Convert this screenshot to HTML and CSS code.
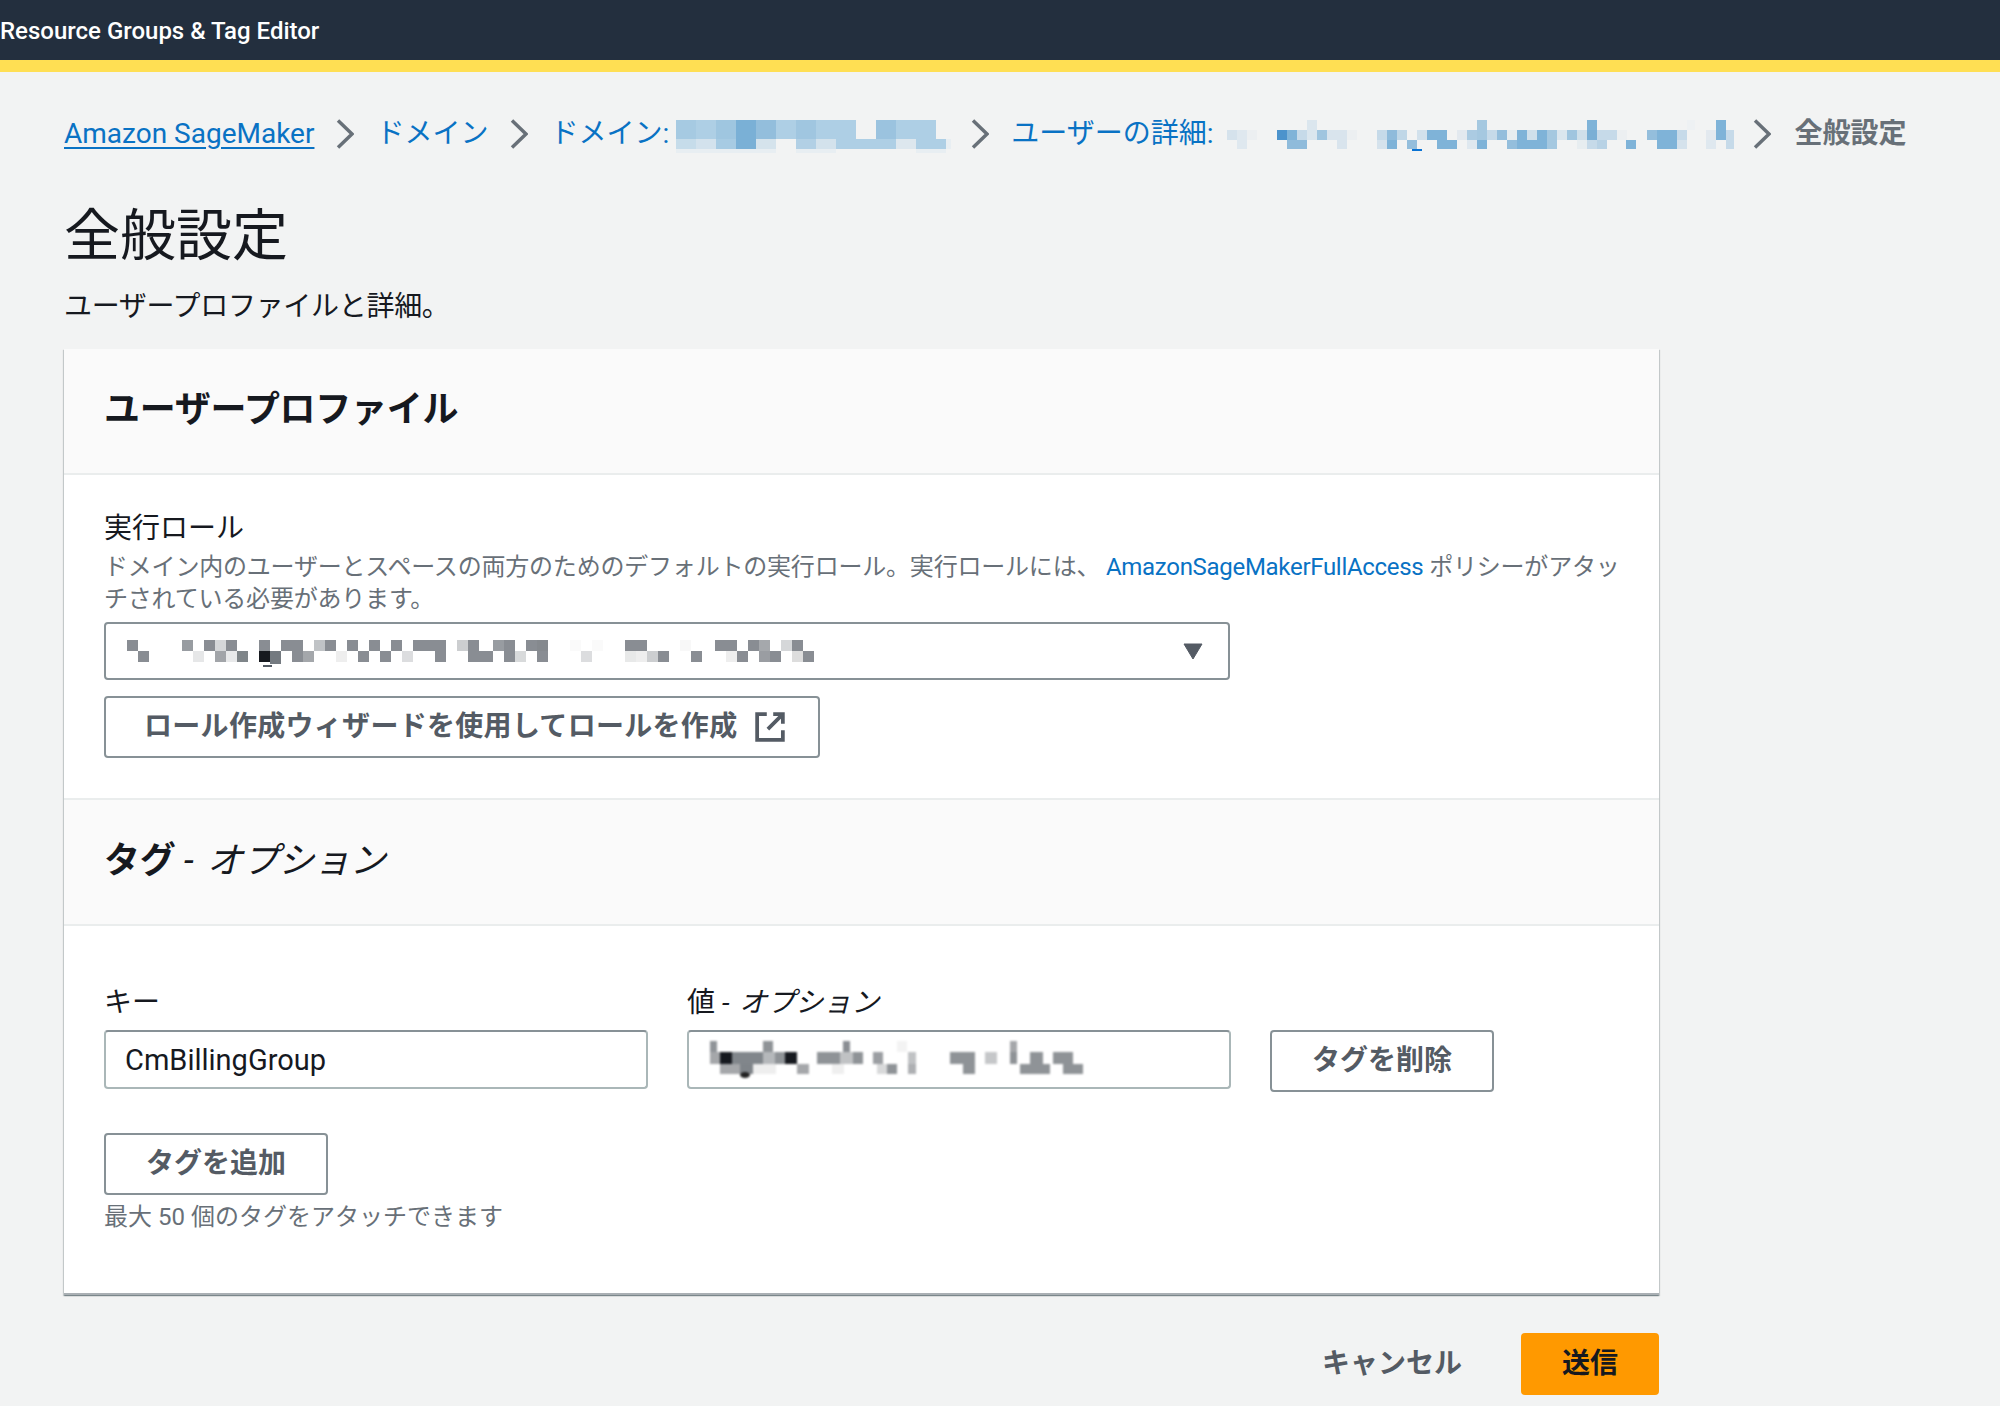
FILE: index.html
```html
<!DOCTYPE html>
<html lang="ja">
<head>
    <meta charset="UTF-8">
    <title>全般設定</title>
    <link rel="stylesheet" href="styles.css">
</head>
<body>
    <div class="topbar">Resource Groups &amp; Tag Editor</div>

    <main class="page">
        <nav class="crumbs">
            <a class="crumb-first" href="#">Amazon SageMaker</a>
            <svg class="chevron" viewBox="0 0 18 30"><path d="M2 1.5 16 15 2 28.5"/></svg>
            <a href="#">ドメイン</a>
            <svg class="chevron" viewBox="0 0 18 30"><path d="M2 1.5 16 15 2 28.5"/></svg>
            <span class="crumb-group">
                <a href="#">ドメイン:</a>
                <svg class="mosaic" width="273" height="29">
                    <rect x="0" y="0" width="20" height="19" fill="#a6cae2"/>
                    <rect x="20" y="0" width="20" height="19" fill="#aecfe5"/>
                    <rect x="40" y="0" width="20" height="19" fill="#9fc6e0"/>
                    <rect x="60" y="0" width="20" height="19" fill="#7ab0d6"/>
                    <rect x="80" y="0" width="20" height="19" fill="#93bedc"/>
                    <rect x="100" y="0" width="20" height="19" fill="#aecfe5"/>
                    <rect x="120" y="0" width="20" height="19" fill="#a0c6e0"/>
                    <rect x="140" y="0" width="40" height="19" fill="#aecfe5"/>
                    <rect x="200" y="0" width="20" height="19" fill="#9bc3df"/>
                    <rect x="220" y="0" width="40" height="19" fill="#aecfe5"/>
                    <rect x="0" y="19" width="20" height="10" fill="#c6dcea"/>
                    <rect x="20" y="19" width="20" height="10" fill="#d3e2ed"/>
                    <rect x="40" y="19" width="20" height="10" fill="#a7cbe3"/>
                    <rect x="60" y="19" width="20" height="10" fill="#7ab0d6"/>
                    <rect x="80" y="19" width="20" height="10" fill="#d5e3ec"/>
                    <rect x="120" y="19" width="20" height="10" fill="#b2d0e5"/>
                    <rect x="140" y="19" width="20" height="10" fill="#d3e2ec"/>
                    <rect x="160" y="19" width="60" height="10" fill="#aecfe5"/>
                    <rect x="220" y="19" width="20" height="10" fill="#dde7ee"/>
                    <rect x="240" y="19" width="30" height="10" fill="#aecfe5"/>
                    <rect x="270" y="19" width="5" height="10" fill="#e8eef2"/>
                    <rect x="0" y="29" width="100" height="4" fill="#e8eef2"/>
                    <rect x="120" y="29" width="40" height="4" fill="#e8eef2"/>
                    <rect x="240" y="29" width="30" height="4" fill="#e8eef2"/>
                </svg>
            </span>
            <svg class="chevron" viewBox="0 0 18 30"><path d="M2 1.5 16 15 2 28.5"/></svg>
            <span class="crumb-group crumb-wide">
                <a href="#">ユーザーの詳細:</a>
                <svg class="mosaic" width="504" height="29">
                    <rect x="80" y="0" width="10" height="10" fill="#dbe6ee"/>
                    <rect x="250" y="0" width="10" height="10" fill="#a5c8e0"/>
                    <rect x="360" y="0" width="10" height="10" fill="#7fb3d8"/>
                    <rect x="460" y="0" width="8" height="10" fill="#eef1f3"/>
                    <rect x="489" y="0" width="10" height="10" fill="#7fb3d8"/>
                    <rect x="0" y="10" width="10" height="10" fill="#d5e2ec"/>
                    <rect x="10" y="10" width="10" height="10" fill="#dfe8ef"/>
                    <rect x="20" y="10" width="10" height="10" fill="#eceff1"/>
                    <rect x="50" y="10" width="10" height="10" fill="#4c93cc"/>
                    <rect x="60" y="10" width="10" height="10" fill="#7fb3d8"/>
                    <rect x="70" y="10" width="10" height="10" fill="#c6dae9"/>
                    <rect x="80" y="10" width="10" height="10" fill="#dbe6ee"/>
                    <rect x="90" y="10" width="10" height="10" fill="#a0c5df"/>
                    <rect x="100" y="10" width="20" height="10" fill="#d9e4ed"/>
                    <rect x="120" y="10" width="10" height="10" fill="#eceff1"/>
                    <rect x="150" y="10" width="10" height="10" fill="#c6dae9"/>
                    <rect x="160" y="10" width="10" height="10" fill="#8fbbdb"/>
                    <rect x="170" y="10" width="10" height="10" fill="#c0d7e7"/>
                    <rect x="190" y="10" width="10" height="10" fill="#d2e1ec"/>
                    <rect x="200" y="10" width="20" height="10" fill="#7fb3d8"/>
                    <rect x="230" y="10" width="10" height="10" fill="#e3e9ef"/>
                    <rect x="240" y="10" width="10" height="10" fill="#abcbe2"/>
                    <rect x="250" y="10" width="10" height="10" fill="#a5c8e0"/>
                    <rect x="260" y="10" width="10" height="10" fill="#c6dae9"/>
                    <rect x="270" y="10" width="10" height="10" fill="#94bedc"/>
                    <rect x="280" y="10" width="10" height="10" fill="#e7edf0"/>
                    <rect x="290" y="10" width="10" height="10" fill="#7fb3d8"/>
                    <rect x="300" y="10" width="10" height="10" fill="#d0e0eb"/>
                    <rect x="310" y="10" width="10" height="10" fill="#7fb3d8"/>
                    <rect x="320" y="10" width="10" height="10" fill="#a5c8e0"/>
                    <rect x="330" y="10" width="10" height="10" fill="#dbe6ee"/>
                    <rect x="340" y="10" width="10" height="10" fill="#a0c5df"/>
                    <rect x="350" y="10" width="10" height="10" fill="#cfdfea"/>
                    <rect x="360" y="10" width="10" height="10" fill="#7aafd5"/>
                    <rect x="370" y="10" width="20" height="10" fill="#c6dae9"/>
                    <rect x="390" y="10" width="10" height="10" fill="#eceff1"/>
                    <rect x="420" y="10" width="10" height="10" fill="#94bedc"/>
                    <rect x="430" y="10" width="20" height="10" fill="#7fb3d8"/>
                    <rect x="450" y="10" width="10" height="10" fill="#c6dae9"/>
                    <rect x="479" y="10" width="10" height="10" fill="#e3e9ef"/>
                    <rect x="489" y="10" width="10" height="10" fill="#7fb3d8"/>
                    <rect x="499" y="10" width="8" height="10" fill="#c6dae9"/>
                    <rect x="10" y="20" width="10" height="9" fill="#dfe8ef"/>
                    <rect x="60" y="20" width="20" height="9" fill="#8fbbdb"/>
                    <rect x="110" y="20" width="10" height="9" fill="#d9e4ed"/>
                    <rect x="150" y="20" width="10" height="9" fill="#d5e2ec"/>
                    <rect x="160" y="20" width="10" height="9" fill="#7fb3d8"/>
                    <rect x="180" y="20" width="10" height="9" fill="#94bedc"/>
                    <rect x="185" y="29" width="10" height="2" fill="#0972d3"/>
                    <rect x="210" y="20" width="20" height="9" fill="#7fb3d8"/>
                    <rect x="240" y="20" width="10" height="9" fill="#dfe8ef"/>
                    <rect x="250" y="20" width="10" height="9" fill="#7fb3d8"/>
                    <rect x="280" y="20" width="10" height="9" fill="#94bedc"/>
                    <rect x="290" y="20" width="30" height="9" fill="#7fb3d8"/>
                    <rect x="320" y="20" width="10" height="9" fill="#a5c8e0"/>
                    <rect x="350" y="20" width="10" height="9" fill="#e7edf0"/>
                    <rect x="360" y="20" width="10" height="9" fill="#c6dae9"/>
                    <rect x="370" y="20" width="10" height="9" fill="#b8d2e5"/>
                    <rect x="399" y="20" width="10" height="9" fill="#7fb3d8"/>
                    <rect x="430" y="20" width="20" height="9" fill="#7fb3d8"/>
                    <rect x="450" y="20" width="10" height="9" fill="#d5e2ec"/>
                    <rect x="479" y="20" width="10" height="9" fill="#dfe8ef"/>
                    <rect x="499" y="20" width="8" height="9" fill="#c6dae9"/>
                </svg>
            </span>
            <svg class="chevron" viewBox="0 0 18 30"><path d="M2 1.5 16 15 2 28.5"/></svg>
            <span class="crumb-current">全般設定</span>
        </nav>

        <h1 class="title">全般設定</h1>
        <p class="subtitle">ユーザープロファイルと詳細。</p>

        <section class="card">
            <header class="card-head">
                <h2>ユーザープロファイル</h2>
            </header>
            <div class="card-body role-body">
                <div class="label">実行ロール</div>
                <p class="desc">ドメイン内のユーザーとスペースの両方のためのデフォルトの実行ロール。実行ロールには、 <a href="#">AmazonSageMakerFullAccess</a> ポリシーがアタッ<br>チされている必要があります。</p>
                <div class="select">
                    <svg class="mosaic" width="684" height="22">
                        <rect x="0" y="0" width="11" height="11" fill="#898d93"/>
                        <rect x="55" y="0" width="11" height="11" fill="#989ca1"/>
                        <rect x="77" y="0" width="11" height="11" fill="#898d93"/>
                        <rect x="88" y="0" width="11" height="11" fill="#d5d7d9"/>
                        <rect x="99" y="0" width="11" height="11" fill="#898d93"/>
                        <rect x="132" y="0" width="11" height="11" fill="#898d93"/>
                        <rect x="154" y="0" width="22" height="11" fill="#898d93"/>
                        <rect x="187" y="0" width="11" height="11" fill="#c0c3c6"/>
                        <rect x="198" y="0" width="11" height="11" fill="#898d93"/>
                        <rect x="220" y="0" width="11" height="11" fill="#898d93"/>
                        <rect x="242" y="0" width="11" height="11" fill="#898d93"/>
                        <rect x="264" y="0" width="11" height="11" fill="#898d93"/>
                        <rect x="286" y="0" width="33" height="11" fill="#898d93"/>
                        <rect x="330" y="0" width="11" height="11" fill="#ccced0"/>
                        <rect x="341" y="0" width="11" height="11" fill="#898d93"/>
                        <rect x="11" y="11" width="11" height="11" fill="#898d93"/>
                        <rect x="66" y="11" width="11" height="11" fill="#e6e7e8"/>
                        <rect x="88" y="11" width="11" height="11" fill="#a2a5a9"/>
                        <rect x="99" y="11" width="11" height="11" fill="#e8e9ea"/>
                        <rect x="110" y="11" width="11" height="11" fill="#7f8589"/>
                        <rect x="132" y="11" width="11" height="11" fill="#16191f"/>
                        <rect x="143" y="11" width="11" height="13" fill="#747a80"/>
                        <rect x="165" y="11" width="11" height="11" fill="#898d93"/>
                        <rect x="176" y="11" width="11" height="11" fill="#a4a7ab"/>
                        <rect x="209" y="11" width="11" height="11" fill="#eeeeee"/>
                        <rect x="231" y="11" width="11" height="11" fill="#898d93"/>
                        <rect x="253" y="11" width="11" height="11" fill="#898d93"/>
                        <rect x="275" y="11" width="11" height="11" fill="#dcdddf"/>
                        <rect x="308" y="11" width="11" height="11" fill="#898d93"/>
                        <rect x="341" y="11" width="25" height="11" fill="#898d93"/>
                        <rect x="136" y="25" width="9" height="2" fill="#545b64"/>
                        <g transform="translate(355)">
                            <rect x="11" y="0" width="11" height="11" fill="#989ca1"/>
                            <rect x="22" y="0" width="11" height="11" fill="#898d93"/>
                            <rect x="44" y="0" width="11" height="11" fill="#898d93"/>
                            <rect x="55" y="0" width="11" height="11" fill="#85898e"/>
                            <rect x="88" y="0" width="11" height="11" fill="#fafafa"/>
                            <rect x="110" y="0" width="11" height="11" fill="#fafafa"/>
                            <rect x="143" y="0" width="22" height="11" fill="#898d93"/>
                            <rect x="198" y="0" width="11" height="11" fill="#f8f8f8"/>
                            <rect x="233" y="0" width="22" height="11" fill="#898d93"/>
                            <rect x="266" y="0" width="11" height="11" fill="#898d93"/>
                            <rect x="277" y="0" width="11" height="11" fill="#a5a8ac"/>
                            <rect x="299" y="0" width="11" height="11" fill="#d5d7d9"/>
                            <rect x="310" y="0" width="11" height="11" fill="#898d93"/>
                            <rect x="22" y="11" width="11" height="11" fill="#898d93"/>
                            <rect x="33" y="11" width="11" height="11" fill="#d8dadb"/>
                            <rect x="55" y="11" width="11" height="11" fill="#898d93"/>
                            <rect x="99" y="11" width="11" height="11" fill="#dcdddf"/>
                            <rect x="143" y="11" width="11" height="11" fill="#e8e9e9"/>
                            <rect x="154" y="11" width="11" height="11" fill="#eeeeee"/>
                            <rect x="165" y="11" width="11" height="11" fill="#ccced0"/>
                            <rect x="176" y="11" width="11" height="11" fill="#898d93"/>
                            <rect x="209" y="11" width="11" height="11" fill="#898d93"/>
                            <rect x="244" y="11" width="11" height="11" fill="#eeeeee"/>
                            <rect x="255" y="11" width="11" height="11" fill="#898d93"/>
                            <rect x="277" y="11" width="11" height="11" fill="#9a9da2"/>
                            <rect x="288" y="11" width="11" height="11" fill="#898d93"/>
                            <rect x="310" y="11" width="11" height="11" fill="#dddddd"/>
                            <rect x="321" y="11" width="11" height="11" fill="#898d93"/>
                        </g>
                    </svg>
                    <svg class="caret" viewBox="0 0 20 17"><path d="M1 1h18L10 16z"/></svg>
                </div>
                <button class="btn btn-wizard">
                    ロール作成ウィザードを使用してロールを作成
                    <svg class="external" viewBox="0 0 28 28"><path d="M11 2H2v24h24v-9M17 2h9v9M26 2 12 16"/></svg>
                </button>
            </div>

            <header class="card-head">
                <h2>タグ <span class="optional">- オプション</span></h2>
            </header>
            <div class="card-body tag-body">
                <div class="tag-grid">
                    <div class="label">キー</div>
                    <div class="label">値 <i>- オプション</i></div>
                    <div></div>
                    <div class="field">CmBillingGroup</div>
                    <div class="field">
                        <svg class="mosaic blurred" width="400" height="37">
                            <rect x="0" y="0" width="7" height="11" fill="#909499"/>
                            <rect x="53" y="0" width="10" height="11" fill="#8f9397"/>
                            <rect x="133" y="0" width="7" height="11" fill="#8a8e93"/>
                            <rect x="187" y="0" width="10" height="11" fill="#f3f3f3"/>
                            <rect x="300" y="0" width="7" height="11" fill="#a5a7aa"/>
                            <rect x="0" y="11" width="10" height="12" fill="#a5a7aa"/>
                            <rect x="10" y="11" width="12" height="12" fill="#16191f"/>
                            <rect x="22" y="11" width="32" height="12" fill="#81868b"/>
                            <rect x="53" y="11" width="12" height="12" fill="#b5b8bb"/>
                            <rect x="65" y="11" width="10" height="12" fill="#8f9397"/>
                            <rect x="75" y="11" width="12" height="12" fill="#16191f"/>
                            <rect x="107" y="11" width="23" height="12" fill="#8f9397"/>
                            <rect x="130" y="11" width="13" height="12" fill="#c0c2c4"/>
                            <rect x="143" y="11" width="10" height="12" fill="#8f9397"/>
                            <rect x="163" y="11" width="10" height="12" fill="#9b9ea2"/>
                            <rect x="198" y="11" width="8" height="12" fill="#c0c2c4"/>
                            <rect x="240" y="11" width="25" height="12" fill="#8f9397"/>
                            <rect x="275" y="11" width="12" height="12" fill="#c5c7c9"/>
                            <rect x="300" y="11" width="7" height="12" fill="#8f9397"/>
                            <rect x="320" y="11" width="13" height="12" fill="#8f9397"/>
                            <rect x="343" y="11" width="20" height="12" fill="#8f9397"/>
                            <rect x="10" y="23" width="20" height="10" fill="#a5a7aa"/>
                            <rect x="30" y="23" width="13" height="10" fill="#7f8489"/>
                            <rect x="43" y="23" width="23" height="10" fill="#eeeeee"/>
                            <rect x="87" y="23" width="12" height="10" fill="#a5a7aa"/>
                            <rect x="122" y="23" width="12" height="10" fill="#efefef"/>
                            <rect x="167" y="23" width="10" height="10" fill="#d8d9da"/>
                            <rect x="177" y="23" width="10" height="10" fill="#8f9397"/>
                            <rect x="198" y="23" width="8" height="10" fill="#aeb0b3"/>
                            <rect x="253" y="23" width="12" height="10" fill="#8f9397"/>
                            <rect x="310" y="23" width="30" height="10" fill="#8f9397"/>
                            <rect x="353" y="23" width="20" height="10" fill="#8f9397"/>
                            <ellipse cx="35" cy="34" rx="5" ry="3" fill="#222222"/>
                        </svg>
                    </div>
                    <button class="btn btn-delete">タグを削除</button>
                </div>
                <button class="btn btn-add">タグを追加</button>
                <p class="hint">最大 50 個のタグをアタッチできます</p>
            </div>
        </section>

        <footer class="actions">
            <button class="btn-cancel">キャンセル</button>
            <button class="btn-submit">送信</button>
        </footer>
    </main>
</body>
</html>
```

FILE: styles.css
```css
* {
    box-sizing: border-box;
}
body {
    margin: 0;
    background-color: #f2f3f3;
    color: #16191f;
    font-family: Roboto, "Noto Sans CJK JP", sans-serif;
    font-size: 28px;
    line-height: 40px;
}
a {
    color: #0972c4;
    text-decoration: none;
}

.topbar {
    height: 72px;
    background-color: #232f3e;
    border-bottom: 12px solid #ffdf53;
    color: white;
    font-size: 24px;
    font-weight: 500;
    line-height: 62px;
    white-space: nowrap;
}

.page {
    width: 1595px;
    margin-left: 64px;
}

.crumbs {
    display: flex;
    align-items: center;
    gap: 22px;
    width: 1900px;
    height: 40px;
    margin-top: 42px;
    white-space: nowrap;
}
.crumb-first {
    text-decoration: underline;
    text-underline-offset: 4px;
}
.crumb-group {
    display: flex;
    align-items: center;
    gap: 7px;
}
.crumb-wide {
    gap: 13px;
}
.crumb-current {
    margin-left: 2px;
    color: #687078;
    font-weight: 700;
}
.chevron {
    flex: none;
    width: 18px;
    height: 30px;
    fill: none;
    stroke: #687078;
    stroke-width: 3.5;
}
.mosaic {
    flex: none;
    display: block;
    overflow: visible;
}
.blurred {
    filter: blur(0.8px);
}

.title {
    margin: 46px 0 0;
    font-size: 56px;
    font-weight: 400;
    line-height: 72px;
}
.subtitle {
    margin: 15px 0 0;
    letter-spacing: -0.3px;
    line-height: 40px;
}

.card {
    margin-top: 22px;
    background-color: white;
    box-shadow: 0 1px 1px 0 rgba(0, 28, 36, 0.3), 1px 1px 1px 0 rgba(0, 28, 36, 0.15), -1px 1px 1px 0 rgba(0, 28, 36, 0.15);
    border-bottom: 2px solid #aab0b4;
}
.card-head {
    display: flex;
    align-items: center;
    height: 126px;
    padding: 0 40px 3px;
    background-color: #fafafa;
    border-bottom: 2px solid #eaeded;
}
.card-head h2 {
    margin: 0;
    font-size: 36px;
    font-weight: 700;
    letter-spacing: -0.3px;
    line-height: 48px;
}
.optional {
    font-weight: 400;
    font-style: italic;
    word-spacing: 5px;
}
.card-body {
    padding: 34px 40px 40px;
}
.role-body {
    border-bottom: 2px solid #eaeded;
}
.tag-body {
    padding-top: 57px;
    padding-bottom: 60px;
}

.label {
    line-height: 40px;
}
.label i {
    word-spacing: 3px;
}
.desc {
    margin: 2px 0 7px;
    color: #687078;
    font-size: 24px;
    letter-spacing: -0.2px;
    line-height: 32px;
    white-space: nowrap;
}
.desc a {
    letter-spacing: -0.3px;
}
.hint {
    margin: 6px 0 0;
    color: #687078;
    font-size: 24px;
    line-height: 32px;
}

.select {
    display: flex;
    align-items: center;
    justify-content: space-between;
    width: 1126px;
    height: 58px;
    padding: 0 25px 0 21px;
    background-color: white;
    border: 2px solid #879196;
    border-radius: 4px;
}
.caret {
    width: 20px;
    height: 17px;
    fill: #545b64;
    stroke: #545b64;
    stroke-width: 1;
    stroke-linejoin: round;
}

.btn {
    display: inline-flex;
    align-items: center;
    justify-content: center;
    height: 62px;
    padding: 0 40px;
    background-color: white;
    border: 2px solid #879196;
    border-radius: 4px;
    color: #545b64;
    font: inherit;
    font-weight: 700;
}
.btn-wizard {
    justify-content: flex-start;
    width: 716px;
    margin-top: 16px;
    padding-left: 38px;
    gap: 18px;
    letter-spacing: 0.3px;
    white-space: nowrap;
}
.external {
    flex: none;
    width: 30px;
    height: 30px;
    fill: none;
    stroke: #545b64;
    stroke-width: 3.5;
}

.tag-grid {
    display: grid;
    grid-template-columns: 544px 544px 224px;
    column-gap: 39px;
    row-gap: 7px;
    align-items: start;
}
.field {
    display: flex;
    align-items: center;
    height: 59px;
    padding: 0 21px 0 19px;
    background-color: white;
    border: 2px solid #aab7b8;
    border-top-color: #879196;
    border-radius: 4px;
    font-size: 29px;
}
.field .mosaic {
    margin-left: 2px;
}
.btn-delete {
    width: 224px;
    padding: 0;
}
.btn-add {
    width: 224px;
    margin-top: 41px;
    padding: 0;
}

.actions {
    display: flex;
    justify-content: flex-end;
    align-items: center;
    gap: 59px;
    margin-top: 38px;
}
.btn-cancel {
    padding: 0;
    background: none;
    border: none;
    color: #545b64;
    font: inherit;
    font-weight: 700;
}
.btn-submit {
    width: 138px;
    height: 62px;
    background-color: #ff9900;
    border: none;
    border-radius: 4px;
    color: #16191f;
    font: inherit;
    font-weight: 700;
}
```
